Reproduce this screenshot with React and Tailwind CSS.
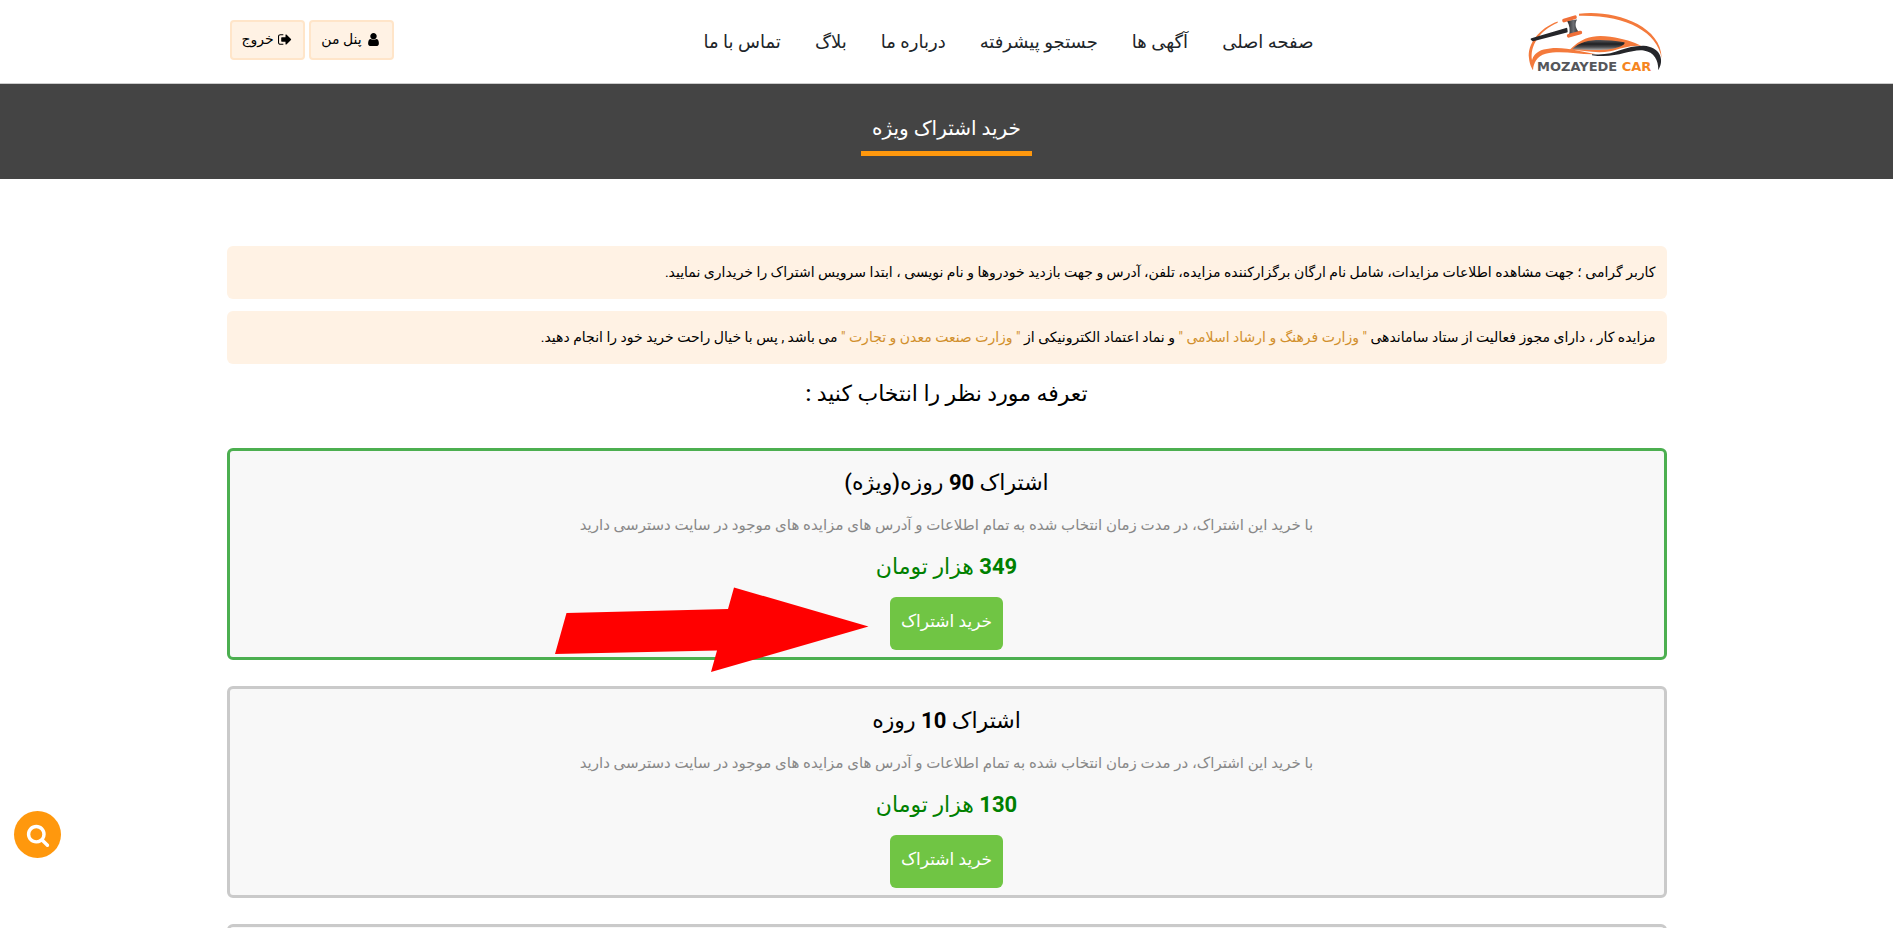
const navLinks = [
  "صفحه اصلی",
  "آگهی ها",
  "جستجو پیشرفته",
  "درباره ما",
  "بلاگ",
  "تماس با ما",
];

const plans = [
  { days: 90, note: "(ویژه)", price: 349, featured: true },
  { days: 10, price: 130 },
];

const icons = {
  user: "M1536 1399q0 109-62.5 187t-150.5 78h-854q-88 0-150.5-78t-62.5-187q0-85 8.5-160.5t31.5-152 58.5-131 94-89 134.5-34.5q131 128 313 128t313-128q76 0 134.5 34.5t94 89 58.5 131 31.5 152 8.5 160.5zm-256-887q0 159-112.5 271.5t-271.5 112.5-271.5-112.5-112.5-271.5 112.5-271.5 271.5-112.5 271.5 112.5 112.5 271.5z",
  signOut:
    "M640 1440q0 4 1 20t.5 26.5-3 23.5-10 19.5-20.5 6.5h-320q-119 0-203.5-84.5t-84.5-203.5v-704q0-119 84.5-203.5t203.5-84.5h320q13 0 22.5 9.5t9.5 22.5q0 4 1 20t.5 26.5-3 23.5-10 19.5-20.5 6.5h-320q-66 0-113 47t-47 113v704q0 66 47 113t113 47h312l11.5 1 11.5 3 8 5.5 7 9 2 13.5zm928-544q0 26-19 45l-544 544q-19 19-45 19t-45-19-19-45v-288h-448q-26 0-45-19t-19-45v-384q0-26 19-45t45-19h448v-288q0-26 19-45t45-19 45 19l544 544q19 19 19 45z",
  search:
    "M1216 832q0-185-131.5-316.5t-316.5-131.5-316.5 131.5-131.5 316.5 131.5 316.5 316.5 131.5 316.5-131.5 131.5-316.5zm512 832q0 52-38 90t-90 38q-54 0-90-38l-343-342q-179 124-399 124-143 0-273.5-55.5t-225-150-150-225-55.5-273.5 55.5-273.5 150-225 225-150 273.5-55.5 273.5 55.5 225 150 150 225 55.5 273.5q0 220-124 399l343 343q37 37 37 90z",
};

function Icon({ name, className }) {
  return (
    <svg viewBox="0 0 1792 1792" fill="currentColor" className={className} aria-hidden="true">
      <path d={icons[name]} />
    </svg>
  );
}

function Logo() {
  return (
    <svg viewBox="80 35 420 185" className="h-[62px] w-[140px]" role="img" aria-label="Mozayede Car">
      <defs>
        <linearGradient id="glass" x1="0" y1="0" x2="0" y2="1">
          <stop offset="0" stopColor="#55565a" />
          <stop offset="0.4" stopColor="#1f2023" />
          <stop offset="0.7" stopColor="#4c4d50" />
          <stop offset="1" stopColor="#a9a9a9" />
        </linearGradient>
        <linearGradient id="head" x1="0" y1="0" x2="1" y2="0">
          <stop offset="0" stopColor="#222326" />
          <stop offset="0.5" stopColor="#6d6f74" />
          <stop offset="1" stopColor="#222326" />
        </linearGradient>
      </defs>
      {/* body outline */}
      <path d="M236 43 C330 30 482 72 484 176 C470 98 380 46 236 49 Z" fill="#f47a3c" />
      <path d="M172 66 C116 86 80 135 86 176 C88 194 93 204 98 212 C100 190 110 170 136 163 C186 150 240 168 290 164 C240 156 180 136 130 150 C108 156 98 170 95 182 C88 140 118 92 172 70 Z" fill="#f47a3c" />
      <path d="M275 164 C340 172 370 138 430 139 C478 142 494 180 474 212 C474 182 462 158 430 153 C390 148 350 178 275 167 Z" fill="#25262a" />
      {/* roof and window */}
      <path d="M208 151 C250 108 290 106 330 112 C370 118 400 128 423 139 C390 136 360 148 330 155 C290 163 250 153 208 151 Z" fill="#f47a3c" />
      <path d="M216 149 C250 116 300 118 372 128 C378 136 350 148 310 151 C280 153 250 150 216 149 Z" fill="url(#glass)" />
      {/* gavel */}
      <path d="M94 119 L198 88 L199 96 L98 122 Z" fill="#25262a" stroke="#25262a" strokeWidth="6" strokeLinejoin="round" />
      <path d="M200 64 L230 60 C222 74 226 88 238 100 L206 108 C210 92 208 78 200 64 Z" fill="url(#head)" />
      <path d="M191 63 L224 53" stroke="#f06f38" strokeWidth="11" strokeLinecap="round" />
      <path d="M205 109 L240 99" stroke="#f06f38" strokeWidth="11" strokeLinecap="round" />
      <text x="110" y="213" direction="ltr" fontSize="39" fontWeight="700" fill="#55565a" fontFamily="DejaVu Sans, sans-serif">
        MOZAYEDE <tspan fill="#f5851f">CAR</tspan>
      </text>
    </svg>
  );
}

function PlanCard({ days, note, price, featured }) {
  return (
    <article
      className={`flex h-[212px] flex-col items-center rounded-md border-3 bg-[#f8f8f8] pt-3 ${
        featured ? "border-[#4caf50]" : "border-[#cacaca]"
      }`}
    >
      <h3 className="text-[22px] leading-[40px] font-medium text-black">
        اشتراک <b>{days}</b> روزه{note}
      </h3>
      <p className="mt-2 text-[15px] leading-[28px] font-medium text-[#888]">
        با خرید این اشتراک، در مدت زمان انتخاب شده به تمام اطلاعات و آدرس های مزایده های موجود در سایت دسترسی دارید
      </p>
      <p className="mt-2 text-[22px] leading-[40px] font-medium text-[#008000]">
        <b>{price}</b> هزار تومان
      </p>
      <button className="mt-[10px] h-[53px] w-[113px] rounded-md bg-[#70c544] pb-1 text-[17px] font-medium text-white">
        خرید اشتراک
      </button>
    </article>
  );
}

export default function App() {
  return (
    <div
      dir="rtl"
      className="relative h-screen overflow-hidden bg-white font-['Roboto','DejaVu_Sans',sans-serif] text-[#212529]"
    >
      <header className="border-b border-[#ccc]">
        <div className="mx-auto flex h-[83px] max-w-[1440px] items-center">
          <a href="#" className="w-[353px]">
            <Logo />
          </a>
          <nav className="flex gap-[34px] text-[18px]">
            {navLinks.map((label) => (
              <a key={label} href="#">
                {label}
              </a>
            ))}
          </nav>
          <div className="flex flex-1 justify-end gap-1 pb-1 pl-[3px] text-[14px] text-black">
            <a href="#" className="flex h-10 w-[85px] items-center justify-center gap-1 rounded border-2 border-[#ffe5c9] bg-[#fff2e4]">
              <Icon name="user" className="size-[15px]" />
              پنل من
            </a>
            <a href="#" className="flex h-10 w-[75px] items-center justify-center gap-1 rounded border-2 border-[#ffe5c9] bg-[#fff2e4]">
              <Icon name="signOut" className="size-[15px]" />
              خروج
            </a>
          </div>
        </div>
      </header>

      <div className="flex h-[95px] justify-center bg-[#444]">
        <h1 className="mt-5 h-[52px] w-[171px] border-b-5 border-[#ff980d] text-center text-[20px] leading-[48px] font-medium text-white">
          خرید اشتراک ویژه
        </h1>
      </div>

      <main className="mx-auto max-w-[1440px] pt-[67px]">
        <div className="space-y-3 text-[14px] leading-[53px] text-black">
          <p className="h-[53px] rounded-md bg-[#fff2e4] px-[11px]">
            کاربر گرامی ؛ جهت مشاهده اطلاعات مزایدات، شامل نام ارگان برگزارکننده مزایده، تلفن، آدرس و جهت بازدید خودروها و نام نویسی ، ابتدا سرویس اشتراک را خریداری نمایید.
          </p>
          <p className="h-[53px] rounded-md bg-[#fff2e4] px-[11px]">
            مزایده کار ، دارای مجوز فعالیت از ستاد ساماندهی <span className="text-[#d18f2c]">" وزارت فرهنگ و ارشاد اسلامی "</span> و نماد اعتماد الکترونیکی از <span className="text-[#d18f2c]">" وزارت صنعت معدن و تجارت "</span> می باشد , پس با خیال راحت خرید خود را انجام دهید.
          </p>
        </div>

        <h2 className="mt-[10px] text-center text-[22px] leading-[40px] font-medium text-black">
          تعرفه مورد نظر را انتخاب کنید :
        </h2>

        <div className="relative mt-[34px] space-y-[26px]">
          {plans.map((plan) => (
            <PlanCard key={plan.days} {...plan} />
          ))}
          <article className="h-[212px] rounded-md border-3 border-[#cacaca] bg-[#f8f8f8]" />
          {/* pointer to the featured plan's buy button */}
          <svg viewBox="0 0 314 86" className="absolute top-[139px] right-1/2 mr-[78px] h-[86px] w-[314px]" aria-hidden="true">
            <path d="M11.5 26 L173 22 L179 0.5 L313.5 39.5 L156 85 L162 63.5 L0 67 Z" fill="#f00" />
          </svg>
        </div>
      </main>

      <button
        aria-label="جستجو"
        className="absolute bottom-[70px] left-[14px] flex size-[47px] items-center justify-center rounded-full bg-[#ff980d] text-white"
      >
        <Icon name="search" className="size-6" />
      </button>
    </div>
  );
}
